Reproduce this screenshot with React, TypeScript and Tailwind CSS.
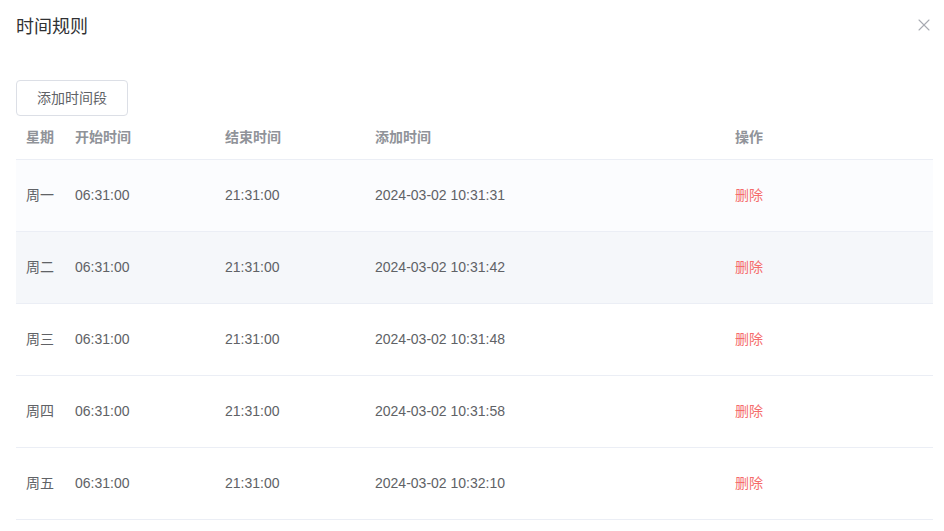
import { X } from "lucide-react";

const ROWS = [
  { day: "周一", start: "06:31:00", end: "21:31:00", added: "2024-03-02 10:31:31" },
  { day: "周二", start: "06:31:00", end: "21:31:00", added: "2024-03-02 10:31:42" },
  { day: "周三", start: "06:31:00", end: "21:31:00", added: "2024-03-02 10:31:48" },
  { day: "周四", start: "06:31:00", end: "21:31:00", added: "2024-03-02 10:31:58" },
  { day: "周五", start: "06:31:00", end: "21:31:00", added: "2024-03-02 10:32:10" },
];

const rowBg = (i: number) => {
  if (i === 0) return "bg-[#fbfcfe]";
  if (i === 1) return "bg-[#f5f7fa]";
  return "bg-white";
};

export default function App() {
  return (
    <div
      className="w-[944px] h-[531px] bg-white overflow-hidden text-[14px] text-[#606266]"
      style={{ fontFamily: '"Liberation Sans", "Noto Sans CJK SC", sans-serif' }}
    >
      <div className="flex items-start justify-between pl-4 pr-[10px] pt-[15px]">
        <h1 className="text-[18px] leading-6 text-[#303133]">时间规则</h1>
        <X className="w-5 h-5 text-[#a8abb2]" strokeWidth={1.3} />
      </div>

      <div className="pl-4 mt-[41px]">
        <button className="h-9 px-5 border border-[#dcdfe6] rounded text-[14px] text-[#606266] bg-white">
          添加时间段
        </button>

        <div className="w-[917px]">
          <div className="flex h-11 items-center border-b border-[#ebeef5] font-bold text-[#909399]">
            <div className="w-[49px] pl-[10px]">星期</div>
            <div className="w-[150px] pl-[10px]">开始时间</div>
            <div className="w-[150px] pl-[10px]">结束时间</div>
            <div className="w-[360px] pl-[10px]">添加时间</div>
            <div className="flex-1 pl-[10px]">操作</div>
          </div>
          {ROWS.map((r, i) => (
            <div
              key={r.day}
              className={`flex h-[72px] items-center border-b border-[#ebeef5] ${rowBg(i)}`}
            >
              <div className="w-[49px] pl-[10px]">{r.day}</div>
              <div className="w-[150px] pl-[10px]">{r.start}</div>
              <div className="w-[150px] pl-[10px]">{r.end}</div>
              <div className="w-[360px] pl-[10px]">{r.added}</div>
              <div className="flex-1 pl-[10px] text-[#f56c6c]">删除</div>
            </div>
          ))}
        </div>
      </div>
    </div>
  );
}
